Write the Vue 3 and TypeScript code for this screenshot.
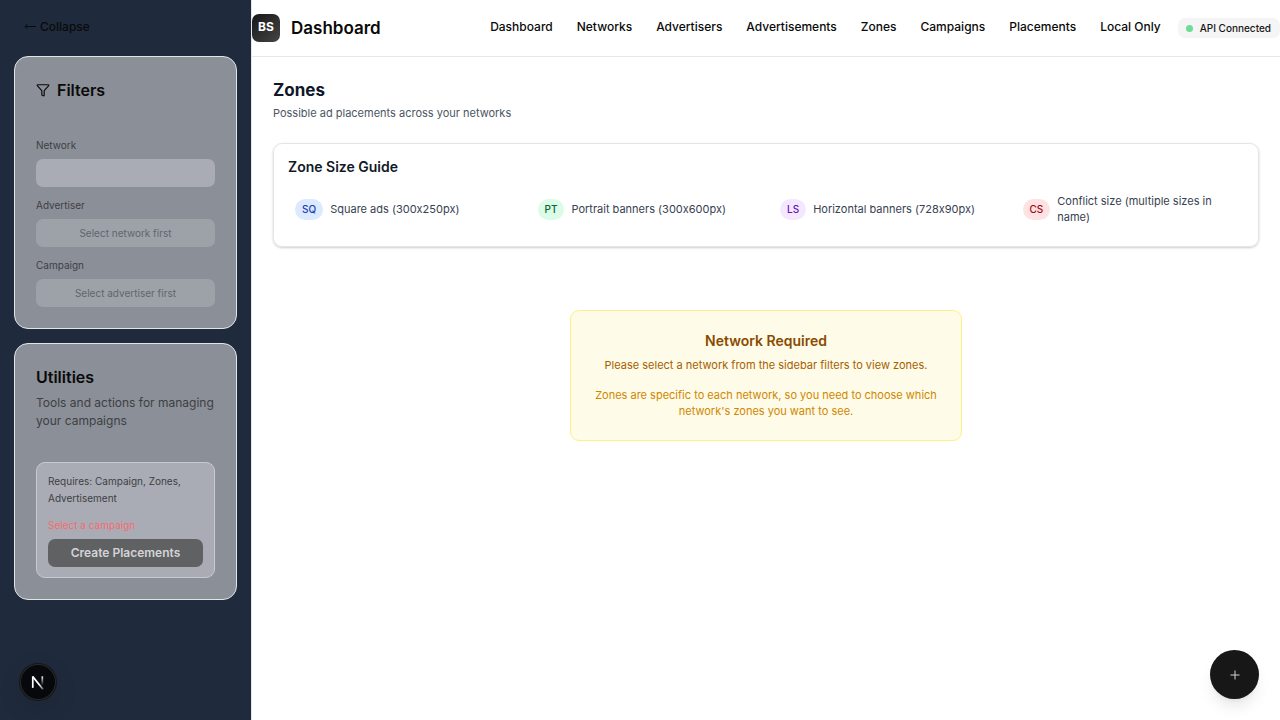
<script setup lang="ts">
import { ref } from 'vue'

interface ZoneSize {
  code: string
  tone: string
  label: string
}

const links: string[] = [
  'Dashboard',
  'Networks',
  'Advertisers',
  'Advertisements',
  'Zones',
  'Campaigns',
  'Placements',
  'Local Only',
]

const sizes: ZoneSize[] = [
  { code: 'SQ', tone: 'blue', label: 'Square ads (300x250px)' },
  { code: 'PT', tone: 'green', label: 'Portrait banners (300x600px)' },
  { code: 'LS', tone: 'purple', label: 'Horizontal banners (728x90px)' },
  { code: 'CS', tone: 'red', label: 'Conflict size (multiple sizes in name)' },
]

const network = ref('')
const advertiser = ref('')
const campaign = ref('')
</script>

<template>
  <div class="app">
    <aside class="sidebar">
      <button class="collapse" type="button">
        <svg class="arrow" viewBox="0 0 12 8" aria-hidden="true">
          <path d="M12 4.500H1M3.500 2L1 4.500l2.500 2.500" />
        </svg>
        Collapse
      </button>

      <section class="panel">
        <h2 class="panel-title filters-title">
          <svg class="funnel" viewBox="0 0 24 24" aria-hidden="true">
            <path d="M10 20a1 1 0 0 0 .553.895l2 1A1 1 0 0 0 14 21v-7a2 2 0 0 1 .517-1.341L21.740 4.670A1 1 0 0 0 21 3H3a1 1 0 0 0-.742 1.670l7.225 7.989A2 2 0 0 1 10 14z" />
          </svg>
          Filters
        </h2>
        <div class="fields">
          <div class="field">
            <label for="network">Network</label>
            <select id="network" v-model="network">
              <option value=""></option>
            </select>
          </div>
          <div class="field">
            <label for="advertiser">Advertiser</label>
            <select id="advertiser" v-model="advertiser" disabled>
              <option value="">Select network first</option>
            </select>
          </div>
          <div class="field">
            <label for="campaign">Campaign</label>
            <select id="campaign" v-model="campaign" disabled>
              <option value="">Select advertiser first</option>
            </select>
          </div>
        </div>
      </section>

      <section class="panel">
        <h2 class="panel-title">Utilities</h2>
        <p class="panel-text">Tools and actions for managing your campaigns</p>
        <div class="utility">
          <p class="requires">Requires: Campaign, Zones, Advertisement</p>
          <p class="missing">Select a campaign</p>
          <button class="create" type="button" disabled>Create Placements</button>
        </div>
      </section>
    </aside>

    <div class="content">
      <header class="topbar">
        <div class="brand">
          <span class="logo">BS</span>
          <span class="brand-name">Dashboard</span>
        </div>
        <nav class="nav">
          <a v-for="link in links" :key="link" href="#">{{ link }}</a>
        </nav>
        <div class="status"><span class="dot"></span>API Connected</div>
      </header>

      <main class="main">
        <h1>Zones</h1>
        <p class="subtitle">Possible ad placements across your networks</p>

        <section class="guide">
          <h2>Zone Size Guide</h2>
          <ul class="sizes">
            <li v-for="size in sizes" :key="size.code">
              <span class="badge" :class="size.tone">{{ size.code }}</span>
              <span>{{ size.label }}</span>
            </li>
          </ul>
        </section>

        <section class="notice">
          <h2>Network Required</h2>
          <p class="notice-main">Please select a network from the sidebar filters to view zones.</p>
          <p class="notice-more">
            Zones are specific to each network, so you need to choose which network's zones you want to see.
          </p>
        </section>
      </main>
    </div>

    <button class="next-badge" type="button" aria-label="Open developer tools">
      <svg viewBox="0 0 40 40" aria-hidden="true">
        <defs>
          <linearGradient id="diagonal" gradientUnits="userSpaceOnUse" x1="22" y1="22" x2="28" y2="30">
            <stop stop-color="#fff" />
            <stop offset="1" stop-color="#fff" stop-opacity="0.100" />
          </linearGradient>
          <linearGradient id="stem" gradientUnits="userSpaceOnUse" x1="26" y1="13" x2="26" y2="24">
            <stop stop-color="#fff" />
            <stop offset="1" stop-color="#fff" stop-opacity="0" />
          </linearGradient>
        </defs>
        <path d="M14.200 14L25.500 28" fill="none" stroke="url(#diagonal)" stroke-width="1.900" />
        <path d="M14.200 13.700V26.500" fill="none" stroke="#fff" stroke-width="1.900" />
        <path d="M24.800 13.700V24" fill="none" stroke="url(#stem)" stroke-width="1.900" />
      </svg>
    </button>

    <button class="fab" type="button" aria-label="Add">
      <svg viewBox="0 0 10 10" aria-hidden="true"><path d="M5 0.500v9M0.500 5h9" /></svg>
    </button>
  </div>
</template>

<style>
body {
  margin: 0;
  background: #fff;
}
</style>

<style scoped>
.app,
.app * {
  box-sizing: border-box;
}

.app {
  display: flex;
  min-height: 100vh;
  overflow: hidden;
  font-family: Inter, 'Liberation Sans', sans-serif;
  font-size: 11px;
  font-variant-ligatures: no-contextual;
  line-height: 16px;
  color: #0a0a0a;
}

h1,
h2,
p,
ul {
  margin: 0;
  padding: 0;
}

button,
select {
  font-family: inherit;
}

svg {
  display: block;
}

.sidebar {
  display: flex;
  flex: none;
  flex-direction: column;
  gap: 14px;
  width: 252px;
  padding: 13px 14px 14px;
  background: #1f2a3c;
  border-right: 1px solid #e2e8f0;
}

.collapse {
  display: flex;
  align-items: center;
  gap: 4px;
  align-self: flex-start;
  height: 28px;
  margin-bottom: 1px;
  padding: 0 10px 2px;
  border: 0;
  background: none;
  color: #0a0a0a;
  font-size: 12px;
  font-weight: 500;
}

.arrow {
  width: 12px;
  height: 8px;
  fill: none;
  stroke: currentColor;
}

.panel {
  padding: 21px;
  border: 1px solid #e2e4e8;
  border-radius: 14px;
  background: #8b8f97;
}

.panel-title {
  font-size: 16px;
  font-weight: 600;
  line-height: 24px;
}

.filters-title {
  display: flex;
  align-items: center;
  gap: 7px;
}

.funnel {
  width: 14px;
  height: 14px;
  fill: none;
  stroke: currentColor;
  stroke-width: 2;
  stroke-linejoin: round;
}

.fields {
  display: grid;
  gap: 10px;
  margin-top: 35px;
}

.field {
  display: grid;
  gap: 6px;
}

.field label {
  color: #3d3f44;
  font-size: 10px;
  line-height: 16px;
}

.field select {
  width: 100%;
  height: 28px;
  padding: 0 10px;
  border: 0;
  border-radius: 7px;
  appearance: none;
  background: #a9acb5;
  color: #0a0a0a;
  font-size: 10px;
  text-align: center;
  text-align-last: center;
}

.field select:disabled {
  background: #9da1a8;
  color: #62656b;
  opacity: 1;
}

.panel-text {
  margin-top: 5px;
  color: #3d3f44;
  font-size: 12px;
  line-height: 18px;
}

.utility {
  margin-top: 32px;
  padding: 10px 11px;
  border: 1px solid #c8cad0;
  border-radius: 9px;
  background: #a9acb5;
}

.requires {
  color: #3d3f44;
  font-size: 10px;
  line-height: 17px;
}

.missing {
  margin-top: 10px;
  color: #fb6a6e;
  font-size: 10px;
  line-height: 16px;
}

.create {
  width: 100%;
  height: 28px;
  margin-top: 6px;
  padding: 0 0 2px;
  border: 0;
  border-radius: 7px;
  background: #606163;
  color: #d3d4d7;
  font-size: 12px;
  font-weight: 600;
}

.content {
  flex: 1;
  min-width: 0;
}

.topbar {
  display: flex;
  align-items: center;
  height: 57px;
  border-bottom: 1px solid #e2e8f0;
}

.brand {
  display: flex;
  align-items: center;
  gap: 11px;
}

.logo {
  display: grid;
  place-items: center;
  width: 28px;
  height: 28px;
  padding-bottom: 2px;
  border-radius: 7px;
  background: linear-gradient(135deg, #171717, #454545);
  color: #fff;
  font-size: 12px;
  font-weight: 700;
}

.brand-name {
  font-size: 17px;
  font-weight: 600;
  line-height: 24px;
}

.nav {
  display: flex;
  gap: 24px;
  margin-left: auto;
  padding-bottom: 2px;
}

.nav a {
  color: #0a0a0a;
  font-size: 12px;
  font-weight: 500;
  line-height: 18px;
  text-decoration: none;
  white-space: nowrap;
}

.status {
  display: flex;
  align-items: center;
  gap: 7px;
  height: 20px;
  margin-left: 17px;
  padding: 0 9px 0 8px;
  border-radius: 7px;
  background: #f5f5f5;
  color: #171717;
  font-size: 10px;
  font-weight: 500;
  white-space: nowrap;
}

.dot {
  width: 7px;
  height: 7px;
  border-radius: 50%;
  background: #6cdc96;
}

.main {
  padding: 21px;
}

h1 {
  color: #0f172a;
  font-size: 17px;
  font-weight: 700;
  line-height: 24px;
}

.subtitle {
  margin-top: 3px;
  color: #4b5563;
}

.guide {
  margin-top: 22px;
  padding: 14px;
  border: 1px solid #e5e5e5;
  border-radius: 9px;
  box-shadow: 0 1px 3px rgba(0, 0, 0, 0.1), 0 1px 2px rgba(0, 0, 0, 0.1);
}

.guide h2 {
  color: #111827;
  font-size: 14px;
  font-weight: 600;
  line-height: 18px;
}

.sizes {
  display: grid;
  grid-template-columns: repeat(4, minmax(0, 1fr));
  gap: 14px;
  margin-top: 10px;
  list-style: none;
}

.sizes li {
  display: flex;
  align-items: center;
  gap: 7px;
  padding: 7px;
  color: #374151;
}

.badge {
  flex: none;
  padding: 2px 7px;
  border-radius: 11px;
  font-size: 10px;
  font-weight: 500;
  line-height: 17px;
}

.blue {
  background: #dbeafe;
  color: #193cb8;
}

.green {
  background: #dcfce7;
  color: #016630;
}

.purple {
  background: #f3e8ff;
  color: #6e11b0;
}

.red {
  background: #ffe2e2;
  color: #9f0712;
}

.notice {
  width: 392px;
  max-width: 100%;
  margin: 63px auto 0;
  padding: 21px;
  border: 1px solid #fff085;
  border-radius: 9px;
  background: #fefbe8;
  text-align: center;
}

.notice h2 {
  color: #894b00;
  font-size: 14px;
  font-weight: 600;
  line-height: 18px;
}

.notice-main {
  margin-top: 7px;
  color: #a65f00;
}

.notice-more {
  margin-top: 14px;
  color: #d08700;
}

.next-badge {
  position: fixed;
  bottom: 20px;
  left: 20px;
  width: 36px;
  height: 36px;
  padding: 0;
  border: 0;
  border-radius: 50%;
  background: #07080b;
  box-shadow: 0 0 0 1px #151719, inset 0 0 0 1px #2a2b2d, 0 8px 24px rgba(0, 0, 0, 0.12);
}

.next-badge svg {
  width: 36px;
  height: 36px;
}

.fab {
  position: fixed;
  right: 21px;
  bottom: 21px;
  display: grid;
  place-items: center;
  width: 49px;
  height: 49px;
  padding: 0;
  border: 0;
  border-radius: 50%;
  background: #171717;
  box-shadow: 0 10px 15px -3px rgba(0, 0, 0, 0.1), 0 4px 6px -4px rgba(0, 0, 0, 0.1);
}

.fab svg {
  width: 10px;
  height: 10px;
  fill: none;
  stroke: #d4d4d4;
  stroke-width: 1;
}
</style>
